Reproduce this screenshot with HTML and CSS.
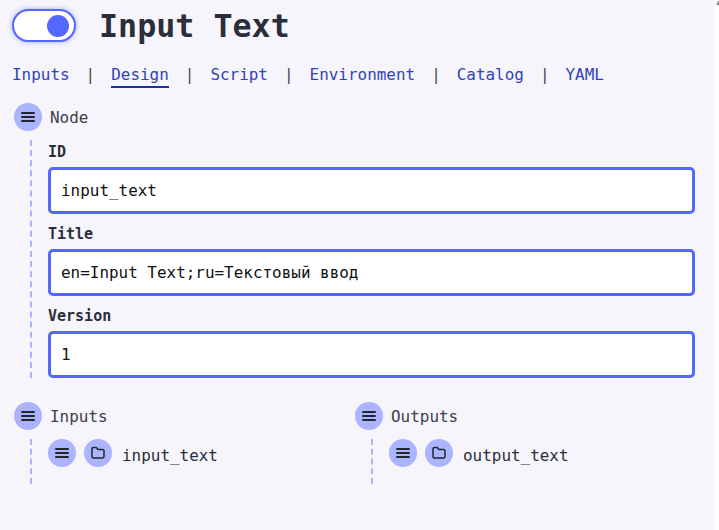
FILE: index.html
```html
<!DOCTYPE html>
<html lang="en">
<head>
    <meta charset="UTF-8">
    <title>Input Text</title>
    <link rel="stylesheet" href="styles.css">
</head>
<body>
    <span class="scroll-arrow"></span>
    <div class="header">
        <span class="toggle"><span class="toggle-knob"></span></span>
        <h1>Input Text</h1>
    </div>
    <div class="tabs">
        <a>Inputs</a><span class="sep">|</span>
        <a class="active">Design</a><span class="sep">|</span>
        <a>Script</a><span class="sep">|</span>
        <a>Environment</a><span class="sep">|</span>
        <a>Catalog</a><span class="sep">|</span>
        <a>YAML</a>
    </div>
    <div class="section">
        <div class="section-head">
            <span class="round-btn"><svg viewBox="0 0 16 16"><path d="M2 4h12M2 8h12M2 12h12"/></svg></span>
            <span>Node</span>
        </div>
        <div class="section-body">
            <label>ID</label>
            <input type="text" value="input_text">
            <label>Title</label>
            <input type="text" value="en=Input Text;ru=Текстовый ввод">
            <label>Version</label>
            <input type="text" value="1">
        </div>
    </div>
    <div class="columns">
        <div class="section">
            <div class="section-head">
                <span class="round-btn"><svg viewBox="0 0 16 16"><path d="M2 4h12M2 8h12M2 12h12"/></svg></span>
                <span>Inputs</span>
            </div>
            <div class="section-body port">
                <span class="round-btn"><svg viewBox="0 0 16 16"><path d="M2 4h12M2 8h12M2 12h12"/></svg></span>
                <span class="round-btn"><svg viewBox="0 0 16 16" class="thin"><path d="M2 4a1.5 1.5 0 0 1 1.5-1.5h2.7l1.8 2h4.500a1.500 1.500 0 0 1 1.500 1.500v5.500a1.500 1.500 0 0 1-1.500 1.500h-9a1.500 1.500 0 0 1-1.500-1.500z"/></svg></span>
                <span class="port-name">input_text</span>
            </div>
        </div>
        <div class="section">
            <div class="section-head">
                <span class="round-btn"><svg viewBox="0 0 16 16"><path d="M2 4h12M2 8h12M2 12h12"/></svg></span>
                <span>Outputs</span>
            </div>
            <div class="section-body port">
                <span class="round-btn"><svg viewBox="0 0 16 16"><path d="M2 4h12M2 8h12M2 12h12"/></svg></span>
                <span class="round-btn"><svg viewBox="0 0 16 16" class="thin"><path d="M2 4a1.5 1.5 0 0 1 1.5-1.5h2.7l1.8 2h4.500a1.500 1.500 0 0 1 1.500 1.500v5.500a1.500 1.500 0 0 1-1.500 1.500h-9a1.500 1.500 0 0 1-1.500-1.500z"/></svg></span>
                <span class="port-name">output_text</span>
            </div>
        </div>
    </div>
</body>
</html>
```
FILE: styles.css
```css
html {
    height: 100%;
    overflow: hidden;
    background-color: #fbfbfd;
}
body {
    width: 713px;
    height: 100%;
    margin: 0;
    padding: 9px 18px 0 14px;
    box-sizing: border-box;
    background-color: #f6f5fc;
    color: #2b2d3a;
    font-family: "DejaVu Sans Mono", "Liberation Mono", monospace;
    font-size: 15.95px;
}
.scroll-arrow {
    position: absolute;
    top: 0;
    right: -3px;
    border-left: 3px solid transparent;
    border-right: 3px solid transparent;
    border-bottom: 5px solid #8a8a8a;
}
.header {
    display: flex;
    align-items: center;
    gap: 23px;
    height: 33px;
    margin-left: -2px;
}
.toggle {
    display: flex;
    align-items: center;
    justify-content: flex-end;
    width: 64px;
    height: 33px;
    padding: 0 5px;
    box-sizing: border-box;
    background: white;
    border: 2px solid #5468ff;
    border-radius: 17px;
    box-shadow: 0 0 5px rgba(84,104,255,0.55);
}
.toggle-knob {
    width: 22px;
    height: 22px;
    border-radius: 50%;
    background: #5468ff;
}
h1 {
    margin: 0;
    font-size: 31.7px;
    font-weight: bold;
}
.tabs {
    display: flex;
    align-items: flex-start;
    height: 26px;
    margin: 21px 0 0 -2px;
    line-height: 24px;
    color: #3243b5;
}
.tabs a.active {
    height: 23px;
    border-bottom: 2px solid #1e2ea6;
}
.sep {
    margin: 0 16px;
    color: #4a4c58;
}
.section-head {
    display: flex;
    align-items: center;
    gap: 8px;
    height: 28px;
    color: #3d3f4b;
}
.round-btn {
    display: flex;
    align-items: center;
    justify-content: center;
    flex: none;
    width: 28px;
    height: 28px;
    border-radius: 50%;
    background: #aab4ff;
}
.round-btn svg {
    width: 16px;
    height: 16px;
    fill: none;
    stroke: #22242f;
    stroke-width: 2;
    stroke-linecap: round;
}
.round-btn svg.thin {
    stroke-width: 1.5;
}
.tabs + .section {
    margin-top: 14px;
}
.section-body {
    margin: 9px 0 0 16px;
    padding-left: 16px;
    border-left: 2px dashed #aab4ff;
}
label {
    display: block;
    height: 27px;
    padding-top: 2px;
    box-sizing: border-box;
    font-weight: bold;
    font-size: 15px;
    line-height: 20px;
}
input {
    display: block;
    width: 100%;
    height: 47px;
    margin-bottom: 8px;
    padding: 0 10px;
    box-sizing: border-box;
    background: white;
    border: 3px solid #5468ff;
    border-radius: 5px;
    color: #111;
    font-family: inherit;
    font-size: 15.95px;
}
input:last-child {
    margin-bottom: 0;
}
.columns {
    display: grid;
    grid-template-columns: 341px 1fr;
    margin-top: 24px;
}
.port {
    display: flex;
    align-items: flex-start;
    gap: 8px;
    height: 45px;
}
.port-name {
    margin-left: 2px;
    line-height: 33px;
}
```
